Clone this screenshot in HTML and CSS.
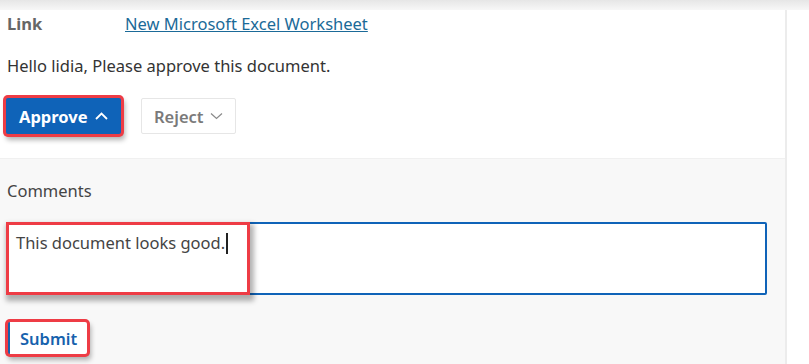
FILE: index.html
```html
<!DOCTYPE html>
<html lang="en">
  <head>
    <meta charset="UTF-8" />
    <title>Approval</title>
    <link rel="stylesheet" href="styles.css">
  </head>
  <body>
    <div class="topbar"></div>
    <div class="main">
      <!-- Details -->
      <div class="details">
        <div class="row">
          <span class="label">Link</span>
          <a class="doc-link" href="#">New Microsoft Excel Worksheet</a>
        </div>
        <p class="message">Hello lidia, Please approve this document.</p>
        <div class="actions">
          <button class="btn primary marked">
            Approve
            <svg width="13" height="8" viewBox="0 0 13 8"><path d="M1 7 L6.5 1.5 L12 7" fill="none" stroke="#fff" stroke-width="1.8"/></svg>
          </button>
          <button class="btn plain">
            Reject
            <svg width="13" height="8" viewBox="0 0 13 8"><path d="M1 1.5 L6.5 6.5 L12 1.5" fill="none" stroke="#8a8a8a" stroke-width="1.2"/></svg>
          </button>
        </div>
      </div>

      <!-- Comments -->
      <div class="comments">
        <div class="comments-label">Comments</div>
        <div class="field">
          <div class="textbox">This document looks good.<span class="cursor"></span></div>
          <span class="highlight"></span>
        </div>
        <button class="btn submit marked">Submit</button>
      </div>
    </div>
  </body>
</html>
```

FILE: styles.css
```css
body {
  margin: 0;
  background: #fff;
  font-family: "Noto Sans", "Open Sans", sans-serif;
  font-size: 16.5px;
  color: #444;
  overflow: hidden;
}
.topbar {
  height: 10px;
  background: linear-gradient(#e6e6e6, #f7f7f7);
}
.main {
  width: 785px;
  border-right: 2px solid #ececec;
  height: 354px;
}
.details {
  padding: 1px 0 0 7px;
  height: 147px;
}
.row {
  display: flex;
  align-items: center;
  height: 24px;
}
.label {
  width: 118px;
  font-weight: bold;
  color: #666;
}
.doc-link {
  color: #1b6a98;
}
.message {
  margin: 19px 0 0;
  line-height: 24px;
  color: #333;
}
.actions {
  display: flex;
  gap: 20px;
  margin-top: 20px;
}
.btn {
  height: 36px;
  font-family: inherit;
  font-size: 16.5px;
  font-weight: bold;
  border-radius: 2px;
  display: flex;
  align-items: center;
  gap: 7px;
  padding: 0 13px;
  cursor: pointer;
}
.primary {
  background: #0f63b8;
  color: #fff;
  border: none;
  margin-left: -1px;
  width: 115px;
}
.plain {
  background: #fff;
  color: #7a7a7a;
  font-weight: 600;
  border: 1px solid #e6e6e6;
  padding: 0 12px;
  gap: 6px;
}
.marked {
  box-shadow: 0 0 0 3px #ee3c45, 2px 4px 5px 2px rgba(0, 0, 0, 0.3);
}
.comments {
  background: #f8f8f8;
  border-top: 1px solid #f0f0f0;
  padding: 20px 0 0 7px;
  height: 200px;
}
.comments-label {
  line-height: 24px;
}
.field {
  position: relative;
  margin: 19px 0 0 -1px;
  width: 761px;
}
.textbox {
  box-sizing: border-box;
  width: 761px;
  height: 73px;
  border: 2px solid #0f63b8;
  border-radius: 2px;
  background: #fff;
  padding: 7px 8px;
  line-height: 24px;
  color: #444;
}
.cursor {
  display: inline-block;
  width: 2px;
  height: 21px;
  margin-left: 1px;
  vertical-align: -5px;
  background: #222;
}
.highlight {
  position: absolute;
  left: 0;
  top: 0;
  width: 244px;
  height: 73px;
  box-sizing: border-box;
  border: 3px solid #ee3c45;
  box-shadow: 2px 4px 5px 2px rgba(0, 0, 0, 0.3);
}
.submit {
  margin: 27px 0 0 1px;
  height: 32px;
  padding: 0 10px;
  background: #fff;
  color: #1662ad;
  font-weight: 600;
  border: none;
  border-left: 2px solid #1662ad;
}
```
